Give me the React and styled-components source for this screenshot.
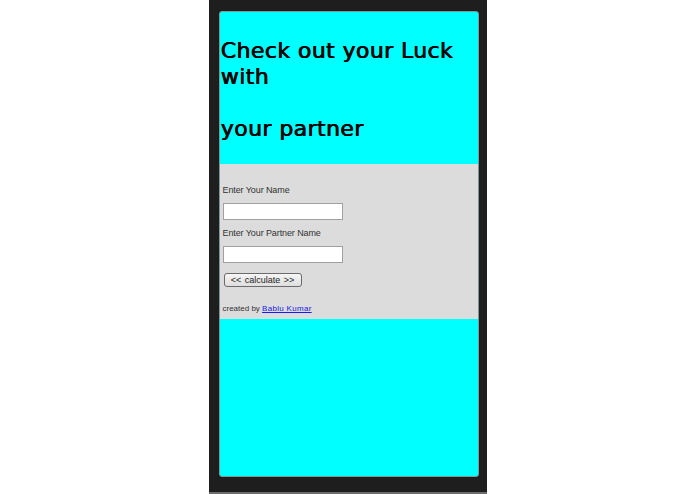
import React from "react";
import styled, { createGlobalStyle } from "styled-components";

const GlobalStyle = createGlobalStyle`
  html, body {
    margin: 0;
    padding: 0;
    background: #ffffff;
  }
`;

export default function App() {
  return (
    <>
      <GlobalStyle />
      <Page>
        <Frame>
          <Panel>
            <Header>
              <Title>
                Check out your Luck with
                <br />
                <br />
                your partner
              </Title>
            </Header>
            <Form onSubmit={(e) => e.preventDefault()}>
              <Label>Enter Your Name</Label>
              <NameInput type="text" />
              <Label>Enter Your Partner Name</Label>
              <NameInput type="text" />
              <CalcButton type="submit">&lt;&lt; calculate &gt;&gt;</CalcButton>
              <Credit>
                created by <a href="#">Bablu Kumar</a>
              </Credit>
            </Form>
            <Filler />
          </Panel>
        </Frame>
        <BottomLine />
      </Page>
    </>
  );
}

const Page = styled.div`
  display: flex;
  flex-direction: column;
  align-items: center;
  height: 494px;
`;

const Frame = styled.div`
  width: 278px;
  height: 492px;
  box-sizing: border-box;
  padding: 11px 8px 15px 10px;
  background: #1e1e1e;
  display: flex;
`;

const BottomLine = styled.div`
  width: 278px;
  height: 2px;
  background: #6d6d6d;
`;

const Panel = styled.div`
  flex: 1;
  display: flex;
  flex-direction: column;
  background: #00ffff;
  border: 1px solid #7a9a9a;
  border-radius: 3px;
  overflow: hidden;
`;

const Header = styled.div`
  padding: 26px 2px 21px 1px;
  height: 152px;
  box-sizing: border-box;
`;

const Title = styled.h1`
  margin: 0;
  font-family: "DejaVu Sans", Verdana, sans-serif;
  font-size: 22px;
  font-weight: 400;
  line-height: 26px;
  letter-spacing: 0.4px;
  color: #050505;
  text-shadow: 0.7px 0 0 #050505, 0.35px 0.3px 0 #050505;
`;

const Form = styled.form`
  background: #dcdcdc;
  height: 155px;
  box-sizing: border-box;
  padding: 21px 4px 0 3px;
  display: flex;
  flex-direction: column;
  align-items: flex-start;
  font-family: "Liberation Sans", Arial, sans-serif;
  font-size: 9px;
  color: #333;
`;

const Label = styled.label`
  display: block;
  line-height: 11px;
  letter-spacing: -0.1px;
`;

const NameInput = styled.input`
  width: 120px;
  height: 17px;
  box-sizing: border-box;
  margin: 7px 0 8px;
  border: 1px solid #a0a0a0;
  background: #fff;
  padding: 0 2px;
  font-size: 9px;
`;

const CalcButton = styled.button`
  margin: 2px 0 0 1px;
  width: 78px;
  height: 14px;
  box-sizing: border-box;
  padding: 0;
  border: 1px solid #6b6b6b;
  border-radius: 3px;
  background: linear-gradient(#f6f6f6, #dedede);
  font-family: "Liberation Sans", Arial, sans-serif;
  font-size: 9px;
  line-height: 12px;
  word-spacing: 1px;
  color: #222;
  cursor: pointer;
`;

const Credit = styled.p`
  margin: 16px 0 0;
  line-height: 11px;
  font-size: 8px;
  color: #333;

  a {
    color: #1a1aee;
    text-decoration: underline;
    letter-spacing: 0.3px;
  }
`;

const Filler = styled.div`
  flex: 1;
`;
